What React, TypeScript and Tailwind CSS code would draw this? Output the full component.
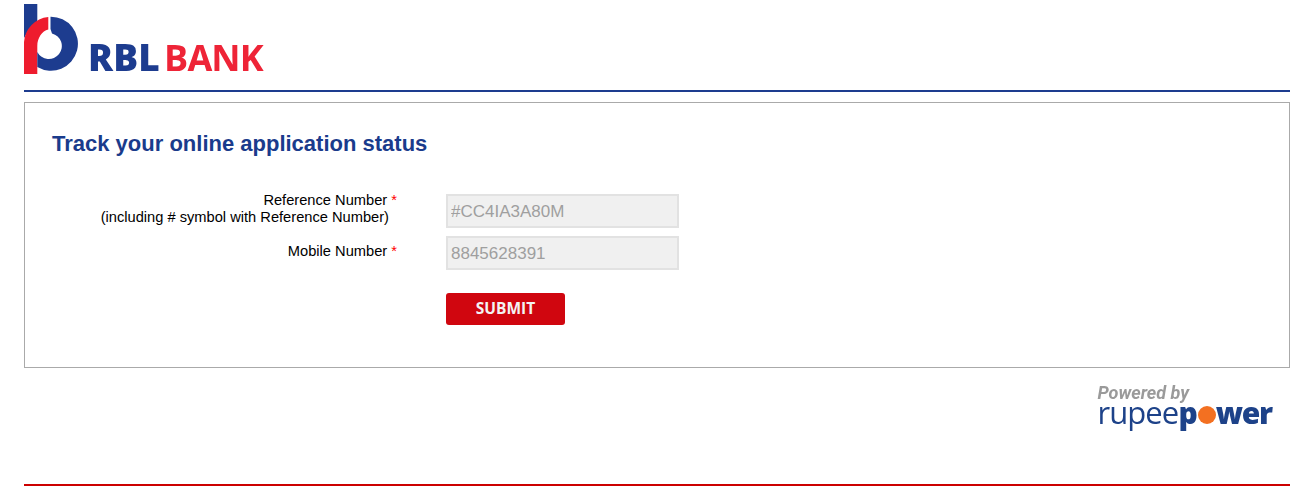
const inputClass =
  'h-[34px] w-[233px] border-2 border-[#e2e2e2] bg-[#f0f0f0] px-[3px] pt-[2px] text-[17px] text-[#9f9f9f] outline-none';

function RblMark() {
  return (
    <svg width="54" height="70" viewBox="24 4 54 70" className="block blur-[0.3px]">
      <path d="M24 4H37.3V24Q29 29 24 38Z" fill="#1d3c8f" />
      <path d="M24 74V42A27 27 0 0 1 48.3 17V29.5C42 31 37.3 38 37.3 46V74Z" fill="#ee1c2e" />
      <path
        d="M50.5 16.7A27 27 0 1 1 37.3 67V52A13 13 0 1 0 52 33.4L50.5 29Z"
        fill="#1d3c8f"
      />
    </svg>
  );
}

function RblLogo() {
  return (
    <div className="flex h-[90px] items-start">
      <div className="mt-1">
        <RblMark />
      </div>
      <div className="mt-[32px] ml-[10px] flex items-baseline font-['Open_Sans',sans-serif] leading-[49px] blur-[0.3px]">
        <span className="text-[37px] font-extrabold tracking-[0.2px] text-[#1d3c8f]">RBL</span>
        <span className="ml-[4px] text-[36px] font-bold tracking-[-0.9px] text-[#ee2437]">BANK</span>
      </div>
    </div>
  );
}

function PoweredBy() {
  return (
    <div className="flex flex-col items-start blur-[0.3px]">
      <span className="font-['Roboto',sans-serif] text-[18px] leading-[20px] font-bold text-[#9a9a9a] italic">
        Powered by
      </span>
      <div
        className="-mt-[5px] flex items-baseline font-['Open_Sans',sans-serif] leading-[28px] text-[#1d4289]"
        aria-label="rupeepower"
      >
        <span className="text-[31px] font-normal tracking-[-0.9px]">rupee</span>
        <span className="text-[30px] font-extrabold">p</span>
        <span className="h-[18px] w-[18px] shrink-0 rounded-full bg-[#f37021]" />
        <span className="text-[30px] font-extrabold tracking-[-1.2px]">wer</span>
      </div>
    </div>
  );
}

export default function App() {
  return (
    <div className="ml-6 w-[1266px] bg-white font-['Liberation_Sans',Arial,sans-serif]">
      <RblLogo />
      <div className="h-[2px] bg-[#1d3c8f]" />

      <div className="mt-[10px] h-[266px] border border-[#aaaaaa] px-7 pt-[27px]">
        <h1 className="-ml-px text-[22px] leading-[28px] font-bold text-[#1a3b8c]">
          Track your online application status
        </h1>

        <div className="mt-[36px] flex flex-col gap-2">
          <div className="flex items-start">
            <div className="-mt-[2px] w-[344px] text-right text-[14.67px] leading-[17px] text-black">
              <div>
                Reference Number <span className="text-[#ff0000]">*</span>
              </div>
              <div className="pr-2">(including # symbol with Reference Number)</div>
            </div>
            <input className={`ml-[49px] ${inputClass}`} value="#CC4IA3A80M" readOnly />
          </div>
          <div className="flex items-start">
            <div className="mt-[7px] w-[344px] text-right text-[14.67px] leading-[17px] text-black">
              Mobile Number <span className="text-[#ff0000]">*</span>
            </div>
            <input className={`ml-[49px] ${inputClass}`} value="8845628391" readOnly />
          </div>
        </div>

        <button className="mt-[23px] ml-[393px] block h-8 w-[119px] rounded-[3px] bg-[#d0060f] font-['Open_Sans',sans-serif] text-[15.5px] font-bold text-[#f3f3f3]">
          SUBMIT
        </button>
      </div>

      <div className="flex h-[116px] justify-end pt-[15px] pr-[18px]">
        <PoweredBy />
      </div>
      <div className="h-[2px] bg-[#cc0000]" />
    </div>
  );
}
